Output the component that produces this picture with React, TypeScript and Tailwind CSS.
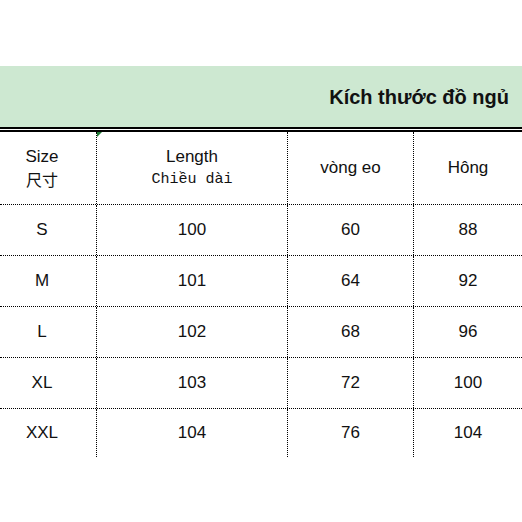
const rows = [
  { size: "S", length: 100, waist: 60, hip: 88 },
  { size: "M", length: 101, waist: 64, hip: 92 },
  { size: "L", length: 102, waist: 68, hip: 96 },
  { size: "XL", length: 103, waist: 72, hip: 100 },
  { size: "XXL", length: 104, waist: 76, hip: 104 },
];

const sans = "font-['Liberation_Sans',Arial,sans-serif]";

export default function App() {
  return (
    <div className={`w-[522px] h-[522px] bg-white pt-[66px] text-[#111] ${sans}`}>
      {/* title band */}
      <div className="h-[61px] bg-[#cde8d1] flex items-center justify-end pr-[13px]">
        <span className="text-[20px] font-bold">Kích thước đồ ngủ</span>
      </div>
      <div className="h-[2px] bg-black" />
      <div className="h-[1px] bg-white" />
      <div className="h-[2px] bg-black" />

      {/* header */}
      <div className="flex h-[73px] border-b border-dotted border-black text-[17px]">
        <div className="w-[97px] shrink-0 border-r border-dotted border-black flex flex-col items-center justify-center pr-[12px] leading-[23px]">
          <span>Size</span>
          <span className="font-['Noto_Sans_CJK_SC',sans-serif] text-[16px]">尺寸</span>
        </div>
        <div className="relative w-[191px] shrink-0 border-r border-dotted border-black flex flex-col items-center justify-center leading-[23px]">
          <div className="absolute left-0 top-0 w-0 h-0 border-t-[5px] border-r-[5px] border-t-[#1f7a35] border-r-transparent" />
          <span>Length</span>
          <span className="font-['Liberation_Mono',monospace] text-[15px]">Chiều dài</span>
        </div>
        <div className="w-[126px] shrink-0 border-r border-dotted border-black flex items-center justify-center">
          vòng eo
        </div>
        <div className="flex-1 flex items-center justify-center">Hông</div>
      </div>

      {/* body */}
      {rows.map((r, i) => {
        const last = i === rows.length - 1;
        return (
          <div
            key={r.size}
            className={`flex text-[17px] ${last ? "h-[48px]" : "h-[51px] border-b border-dotted border-black"}`}
          >
            <div className="w-[97px] shrink-0 border-r border-dotted border-black flex items-center justify-center pr-[12px]">
              {r.size}
            </div>
            <div className="w-[191px] shrink-0 border-r border-dotted border-black flex items-center justify-center">
              {r.length}
            </div>
            <div className="w-[126px] shrink-0 border-r border-dotted border-black flex items-center justify-center">
              {r.waist}
            </div>
            <div className="flex-1 flex items-center justify-center">{r.hip}</div>
          </div>
        );
      })}
    </div>
  );
}
